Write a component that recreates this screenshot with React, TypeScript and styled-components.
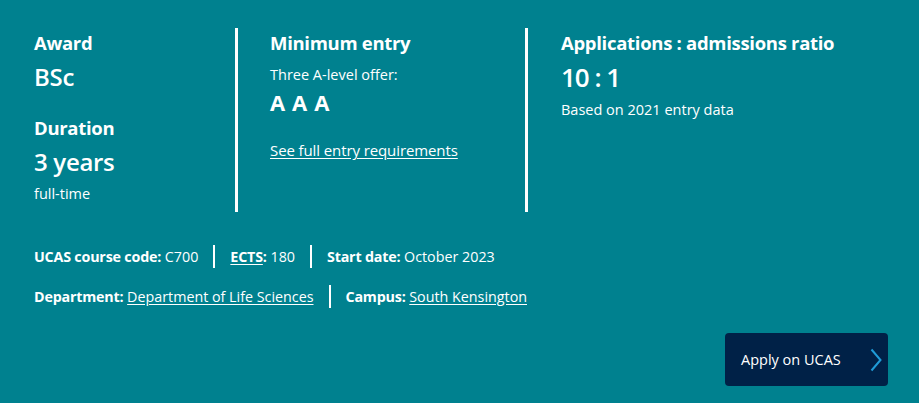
import styled, { createGlobalStyle } from 'styled-components';

const GlobalStyle = createGlobalStyle`
  html, body {
    margin: 0;
    padding: 0;
    background: #00818f;
  }
  body {
    font-family: 'Open Sans', 'Noto Sans', sans-serif;
    color: #ffffff;
  }
`;

const App = () => {
  return (
    <>
      <GlobalStyle />
      <Panel>
        <Summary>
          <Column $width="201px">
            <Heading>Award</Heading>
            <Value>BSc</Value>
            <Heading $gap="23px">Duration</Heading>
            <Value>3 years</Value>
            <Note $gap="6px">full-time</Note>
          </Column>
          <Column $width="290px" $divided>
            <Heading>Minimum entry</Heading>
            <Note $gap="10px">Three A-level offer:</Note>
            <Grade>A A A</Grade>
            <EntryLink href="#">See full entry requirements</EntryLink>
          </Column>
          <Column $divided $inset="33px">
            <Heading>Applications : admissions ratio</Heading>
            <Value $large>10 : 1</Value>
            <Note $gap="7px">Based on 2021 entry data</Note>
          </Column>
        </Summary>

        <Meta>
          <MetaRow>
            <MetaItem>
              <Label>UCAS course code:</Label> C700
            </MetaItem>
            <Divider />
            <MetaItem>
              <Label>
                <abbr>ECTS</abbr>:
              </Label>{' '}
              180
            </MetaItem>
            <Divider />
            <MetaItem>
              <Label>Start date:</Label> October 2023
            </MetaItem>
          </MetaRow>
          <MetaRow>
            <MetaItem>
              <Label>Department:</Label>{' '}
              <MetaLink href="#">Department of Life Sciences</MetaLink>
            </MetaItem>
            <Divider />
            <MetaItem>
              <Label>Campus:</Label> <MetaLink href="#">South Kensington</MetaLink>
            </MetaItem>
          </MetaRow>
        </Meta>

        <Actions>
          <ApplyButton href="#">
            Apply on UCAS
            <svg width="12" height="24" viewBox="0 0 12 24" aria-hidden="true">
              <polyline
                points="1.5,1.5 10.5,12 1.5,22.5"
                fill="none"
                stroke="#1f9bd7"
                strokeWidth="2"
              />
            </svg>
          </ApplyButton>
        </Actions>
      </Panel>
    </>
  );
};

const Panel = styled.section`
  padding: 28px 31px 17px 34px;
  box-sizing: border-box;
  width: 919px;
  height: 403px;
`;

const Summary = styled.div`
  display: flex;
  height: 184px;
`;

const Column = styled.div<{ $width?: string; $divided?: boolean; $inset?: string }>`
  display: flex;
  flex-direction: column;
  align-items: flex-start;
  box-sizing: border-box;
  flex: ${({ $width }) => ($width ? `0 0 ${$width}` : '1 1 auto')};
  padding-top: 3px;
  padding-left: ${({ $divided, $inset }) => ($divided ? $inset || '32px' : '0')};
  border-left: ${({ $divided }) => ($divided ? '3px solid #ffffff' : 'none')};
`;

const Heading = styled.h3<{ $gap?: string }>`
  margin: ${({ $gap }) => $gap || '0'} 0 0;
  font-size: 18.5px;
  line-height: 24px;
  font-weight: 700;
  letter-spacing: -0.3px;
`;

const Value = styled.div<{ $large?: boolean }>`
  margin-top: 6px;
  font-size: ${({ $large }) => ($large ? '26px' : '24px')};
  line-height: 32px;
  font-weight: 600;
  letter-spacing: ${({ $large }) => ($large ? '-1px' : '-0.3px')};
`;

const Note = styled.div<{ $gap?: string }>`
  margin-top: ${({ $gap }) => $gap || '2px'};
  font-size: 14.5px;
  line-height: 20px;
`;

const Grade = styled.div`
  margin-top: 2px;
  font-size: 22px;
  line-height: 30px;
  font-weight: 700;
  letter-spacing: 0.6px;
`;

const EntryLink = styled.a`
  margin-top: 23px;
  color: #ffffff;
  font-size: 15px;
  line-height: 20px;
  letter-spacing: -0.1px;
  text-underline-offset: 2px;
`;

const Meta = styled.div`
  display: flex;
  flex-direction: column;
  gap: 17px;
  margin-top: 33px;
`;

const MetaRow = styled.div`
  display: flex;
  align-items: center;
  height: 23px;
`;

const MetaItem = styled.span`
  font-size: 14.3px;
  line-height: 20px;
  white-space: pre;

  abbr {
    text-decoration: underline;
    text-underline-offset: 2px;
  }
`;

const Label = styled.strong`
  font-weight: 700;
  letter-spacing: -0.2px;
`;

const MetaLink = styled.a`
  color: #ffffff;
  text-underline-offset: 2px;
`;

const Divider = styled.span`
  flex: 0 0 2px;
  height: 23px;
  margin: 0 15px;
  background: #ffffff;
`;

const Actions = styled.div`
  display: flex;
  justify-content: flex-end;
  margin-top: 25px;
`;

const ApplyButton = styled.a`
  display: flex;
  align-items: center;
  justify-content: space-between;
  box-sizing: border-box;
  width: 163px;
  height: 53px;
  padding: 0 6px 0 16px;
  border-radius: 4px;
  background: #002147;
  color: #ffffff;
  font-size: 14.5px;
  font-weight: 500;
  text-decoration: none;
`;

export default App;
